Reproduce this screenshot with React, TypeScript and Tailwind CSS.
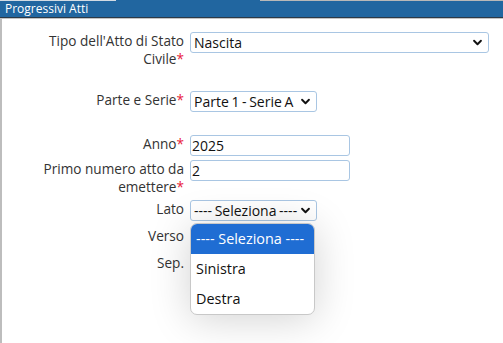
import React from 'react';

function Chevron() {
  return (
    <svg width="11" height="11" viewBox="0 0 16 16" className="shrink-0">
      <path d="M3 5.5l5 5 5-5" fill="none" stroke="#111" strokeWidth="2.8" strokeLinecap="round" strokeLinejoin="round" />
    </svg>
  );
}

function Select({ value, className = '' }: { value: string; className?: string }) {
  return (
    <div className={`flex h-[21px] items-center justify-between rounded-[3px] border border-[#a9c6e3] bg-white pl-[3px] pr-[5px] text-[14px] text-[#111] [word-spacing:-1px] ${className}`}>
      <span className="whitespace-nowrap leading-none">{value}</span>
      <Chevron />
    </div>
  );
}

function Input({ value }: { value: string }) {
  return (
    <div className="flex h-[21px] w-[160px] items-center rounded-[3px] border border-[#a9c6e3] bg-white px-[1px] text-[14px] text-[#111]">
      <span className="leading-none">{value}</span>
    </div>
  );
}

function Label({ children, req }: { children: React.ReactNode; req?: boolean }) {
  return (
    <div className="w-[183px] shrink-0 pr-[1px] text-right text-[13.6px] leading-[18px] whitespace-nowrap text-[#333]">
      {children}
      {req && <span className="text-[#e8203a]">*</span>}
    </div>
  );
}

export default function App() {
  return (
    <div className="relative h-[343px] w-[503px] overflow-hidden bg-white" style={{ fontFamily: '"Open Sans", sans-serif' }}>
      <div className="flex h-[1px]">
        <div className="w-[116px] bg-[#d3dbe3]" />
        <div className="w-[144px] bg-[#2166a0]" />
        <div className="flex-1 bg-[#b8b8b8]" />
      </div>
      <div className="h-[16px] bg-[#2166a0] pl-[5px] text-[12px] leading-[16px] text-white">Progressivi Atti</div>
      <div className="h-[1px] bg-[#2b3a48]" />
      <div className="h-[1px] bg-[#c4c4c4]" />

      <div className="h-[325px] border-l-2 border-[#bdbdbd] pt-[13px]">
        <div className="flex gap-[5px]">
          <Label req>
            Tipo dell'Atto di Stato
            <br />
            Civile
          </Label>
          <Select value="Nascita" className="w-[299px]" />
        </div>

        <div className="mt-[23px] flex gap-[5px]">
          <Label req>Parte e Serie</Label>
          <Select value="Parte 1 - Serie A" className="w-[127px]" />
        </div>

        <div className="mt-[23px] flex gap-[5px]">
          <Label req>Anno</Label>
          <Input value="2025" />
        </div>

        <div className="mt-[4px] flex gap-[5px]">
          <Label req>
            Primo numero atto da
            <br />
            emettere
          </Label>
          <Input value="2" />
        </div>

        <div className="mt-[4px] flex gap-[5px]">
          <Label>Lato</Label>
          <Select value="---- Seleziona ----" className="w-[127px]" />
        </div>

        <div className="mt-[6px] flex gap-[5px]">
          <Label>Verso</Label>
          <Select value="---- Seleziona ----" className="w-[125px]" />
        </div>

        <div className="mt-[6px] flex gap-[5px]">
          <Label>Sep.</Label>
          <Select value="---- Seleziona ----" className="w-[125px]" />
        </div>
      </div>

      <div className="absolute left-[190px] top-[223px] w-[125px] overflow-hidden rounded-[7px] border border-[#c8c8c8] bg-white text-[14.4px] text-[#111] shadow-[0_4px_40px_rgba(0,0,0,0.18)]">
        <div className="flex h-[30px] items-center bg-[#1f6dd3] pl-[5px] text-white">---- Seleziona ----</div>
        <div className="flex h-[30px] items-center pl-[5px]">Sinistra</div>
        <div className="flex h-[30px] items-center pl-[5px]">Destra</div>
      </div>
    </div>
  );
}
